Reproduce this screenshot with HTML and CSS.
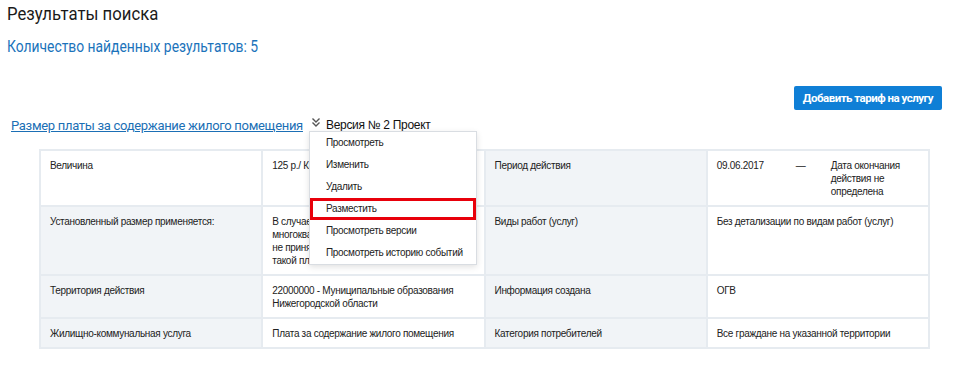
FILE: index.html
```html
<!DOCTYPE html>
<html lang="ru">

<head>
  <meta charset="UTF-8">
  <meta name="viewport" content="width=device-width, initial-scale=1.0">
  <title>Результаты поиска</title>
  <link rel="stylesheet" href="styles.css">
</head>

<body>
  <div class="page">
    <h1 class="title">Результаты поиска</h1>
    <div class="count">Количество найденных результатов: 5</div>

    <div class="toolbar">
      <button class="add-btn">Добавить тариф на услугу</button>
    </div>

    <div class="result">
      <div class="result-head">
        <a href="#" class="result-link">Размер платы за содержание жилого помещения</a>
        <div class="version">
          <svg class="version-icon" width="10" height="11" viewBox="0 0 10 11">
            <path d="M1.5 1.5 L5 5 L8.5 1.5" fill="none" stroke="#555" stroke-width="1.4"/>
            <path d="M1.5 5.5 L5 9 L8.5 5.5" fill="none" stroke="#555" stroke-width="1.4"/>
          </svg>
          <span class="version-text">Версия № 2 Проект</span>
          <ul class="menu">
            <li class="menu-item">Просмотреть</li>
            <li class="menu-item">Изменить</li>
            <li class="menu-item">Удалить</li>
            <li class="menu-item marked">Разместить</li>
            <li class="menu-item">Просмотреть версии</li>
            <li class="menu-item">Просмотреть историю событий</li>
          </ul>
        </div>
      </div>

      <table class="details">
        <tr>
          <td>Величина</td>
          <td>125 р./ Кв. м</td>
          <td class="label">Период действия</td>
          <td>
            <div class="period">
              <span class="period-from">09.06.2017</span>
              <span class="period-dash">—</span>
              <span class="period-to">Дата окончания действия не определена</span>
            </div>
          </td>
        </tr>
        <tr>
          <td class="label">Установленный размер применяется:</td>
          <td>В случае, если собственники<br>многоквартирного дома<br>не приняли решение о размере<br>такой платы</td>
          <td class="label">Виды работ (услуг)</td>
          <td>Без детализации по видам работ (услуг)</td>
        </tr>
        <tr>
          <td class="label">Территория действия</td>
          <td>22000000 - Муниципальные образования Нижегородской области</td>
          <td class="label">Информация создана</td>
          <td>ОГВ</td>
        </tr>
        <tr>
          <td class="label">Жилищно-коммунальная услуга</td>
          <td>Плата за содержание жилого помещения</td>
          <td class="label">Категория потребителей</td>
          <td>Все граждане на указанной территории</td>
        </tr>
      </table>
    </div>
  </div>
</body>

</html>
```

FILE: styles.css
```css
body {
  margin: 0;
  background-color: #fff;
  font-family: "Liberation Sans", Arial, sans-serif;
  color: #222;
}

.page {
  padding: 2px 12px 0 7px;
}

/* no condensed face installed, so squeeze Roboto a bit */
.title {
  margin: 0;
  font-family: Roboto, sans-serif;
  font-weight: normal;
  font-size: 19px;
  line-height: 24px;
  color: #1a1a1a;
  transform: scaleX(0.88);
  transform-origin: left center;
}

.count {
  margin-top: 10px;
  font-family: Roboto, sans-serif;
  font-size: 17px;
  line-height: 20px;
  color: #1b73bb;
  transform: scaleX(0.815);
  transform-origin: left center;
}

.toolbar {
  display: flex;
  justify-content: flex-end;
  margin-top: 30px;
}

.add-btn {
  width: 148px;
  height: 24px;
  padding: 0;
  border: none;
  border-radius: 2px;
  background-color: #0f7fd6;
  color: #fff;
  font-family: Roboto, sans-serif;
  font-weight: bold;
  font-size: 11.5px;
  letter-spacing: -0.5px;
  cursor: pointer;
}

.result-head {
  display: flex;
  align-items: center;
  margin-top: 4px;
  padding-left: 4px;
  height: 22px;
}

.result-link {
  font-family: Roboto, sans-serif;
  font-size: 13px;
  letter-spacing: -0.3px;
  color: #1b6fb5;
  text-decoration: underline;
}

.version {
  position: relative;
  align-self: stretch;
  display: flex;
  align-items: center;
  margin-left: 8px;
}

.version-icon {
  display: block;
  margin-top: -5px;
}

.version-text {
  margin-left: 5px;
  font-size: 12px;
  letter-spacing: -0.3px;
  color: #111;
}

.menu {
  position: absolute;
  top: 17px;
  left: -2px;
  z-index: 2;
  width: 166px;
  margin: 0;
  padding: 0;
  list-style: none;
  background-color: #fff;
  border: 1px solid #d9dde2;
  box-shadow: 0 2px 6px rgba(0, 0, 0, 0.12);
}

.menu-item {
  height: 22px;
  line-height: 22px;
  padding-left: 16px;
  font-size: 10px;
  letter-spacing: -0.3px;
  color: #222;
  white-space: nowrap;
}

.marked {
  box-shadow: inset 0 0 0 3px #e8000b;
}

.details {
  width: 891px;
  margin: 13px 0 0 32px;
  border-collapse: collapse;
  table-layout: fixed;
  border: 1px solid #e3e8ed;
}

.details td {
  width: 25%;
  padding: 8px 9px 7px;
  vertical-align: top;
  font-size: 10px;
  letter-spacing: -0.3px;
  line-height: 13px;
  color: #222;
  border: 2px solid #e6ebf0;
}

.details .label {
  background-color: #f1f4f7;
}

.period {
  display: flex;
}

.period-from {
  width: 79px;
  flex-shrink: 0;
}

.period-dash {
  width: 35px;
  flex-shrink: 0;
}

.period-to {
  width: 78px;
}
```
